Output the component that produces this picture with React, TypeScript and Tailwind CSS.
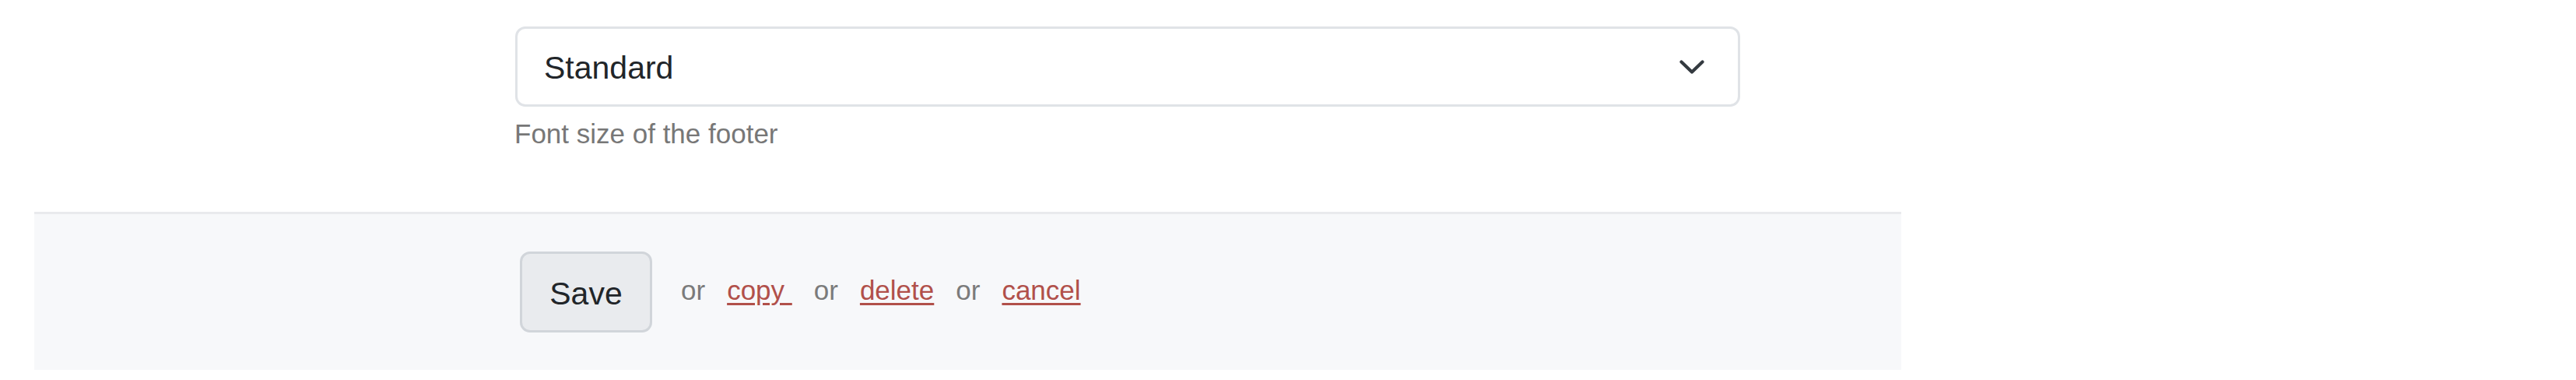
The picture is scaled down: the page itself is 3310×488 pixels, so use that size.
export default function App() {
  return (
    <div className="w-[3310px] h-[488px] bg-white font-['Liberation_Sans',Arial,sans-serif]">
      <div className="ml-[44px] w-[2399px]">
        <div className="pl-[618px] pt-[34px] pb-[79px]">
          <div className="w-[1574px] h-[103px] flex items-center justify-between border-[3px] border-[#e0e3e7] rounded-[13px] bg-white pl-[34px] pr-[43px]">
            <span className="text-[41px] leading-[48px] pt-[3px] text-[#212529]">Standard</span>
            <svg width="32" height="18" viewBox="0 0 32 18" fill="none" className="shrink-0">
              <polyline points="2.5,2.5 16,15.5 29.5,2.5" stroke="#343a40" strokeWidth="4.2" strokeLinecap="round" strokeLinejoin="round" />
            </svg>
          </div>
          <p className="mt-[14px] ml-[-1px] text-[35px] leading-[42px] text-[#777777]">Font size of the footer</p>
        </div>
        <div className="border-t-[3px] border-[#e9eaed] bg-[#f7f8fa] pl-[624px] py-[48px] flex items-center">
          <button className="w-[170px] h-[104px] flex items-center justify-center border-[3px] border-[#d1d5da] rounded-[13px] bg-[#e9ebee] text-[41px] leading-[48px] pt-[4px] text-[#212529]">
            Save
          </button>
          <div className="ml-[37px] pb-[4px] flex items-center gap-[28px] text-[35px] leading-[42px]">
            <span className="text-[#7b7b7b]">or</span>
            <a className="text-[#b1504a] underline decoration-[3px] underline-offset-[4px] whitespace-pre">copy </a>
            <span className="text-[#7b7b7b]">or</span>
            <a className="text-[#b1504a] underline decoration-[3px] underline-offset-[4px]">delete</a>
            <span className="text-[#7b7b7b]">or</span>
            <a className="text-[#b1504a] underline decoration-[3px] underline-offset-[4px]">cancel</a>
          </div>
        </div>
      </div>
    </div>
  );
}
